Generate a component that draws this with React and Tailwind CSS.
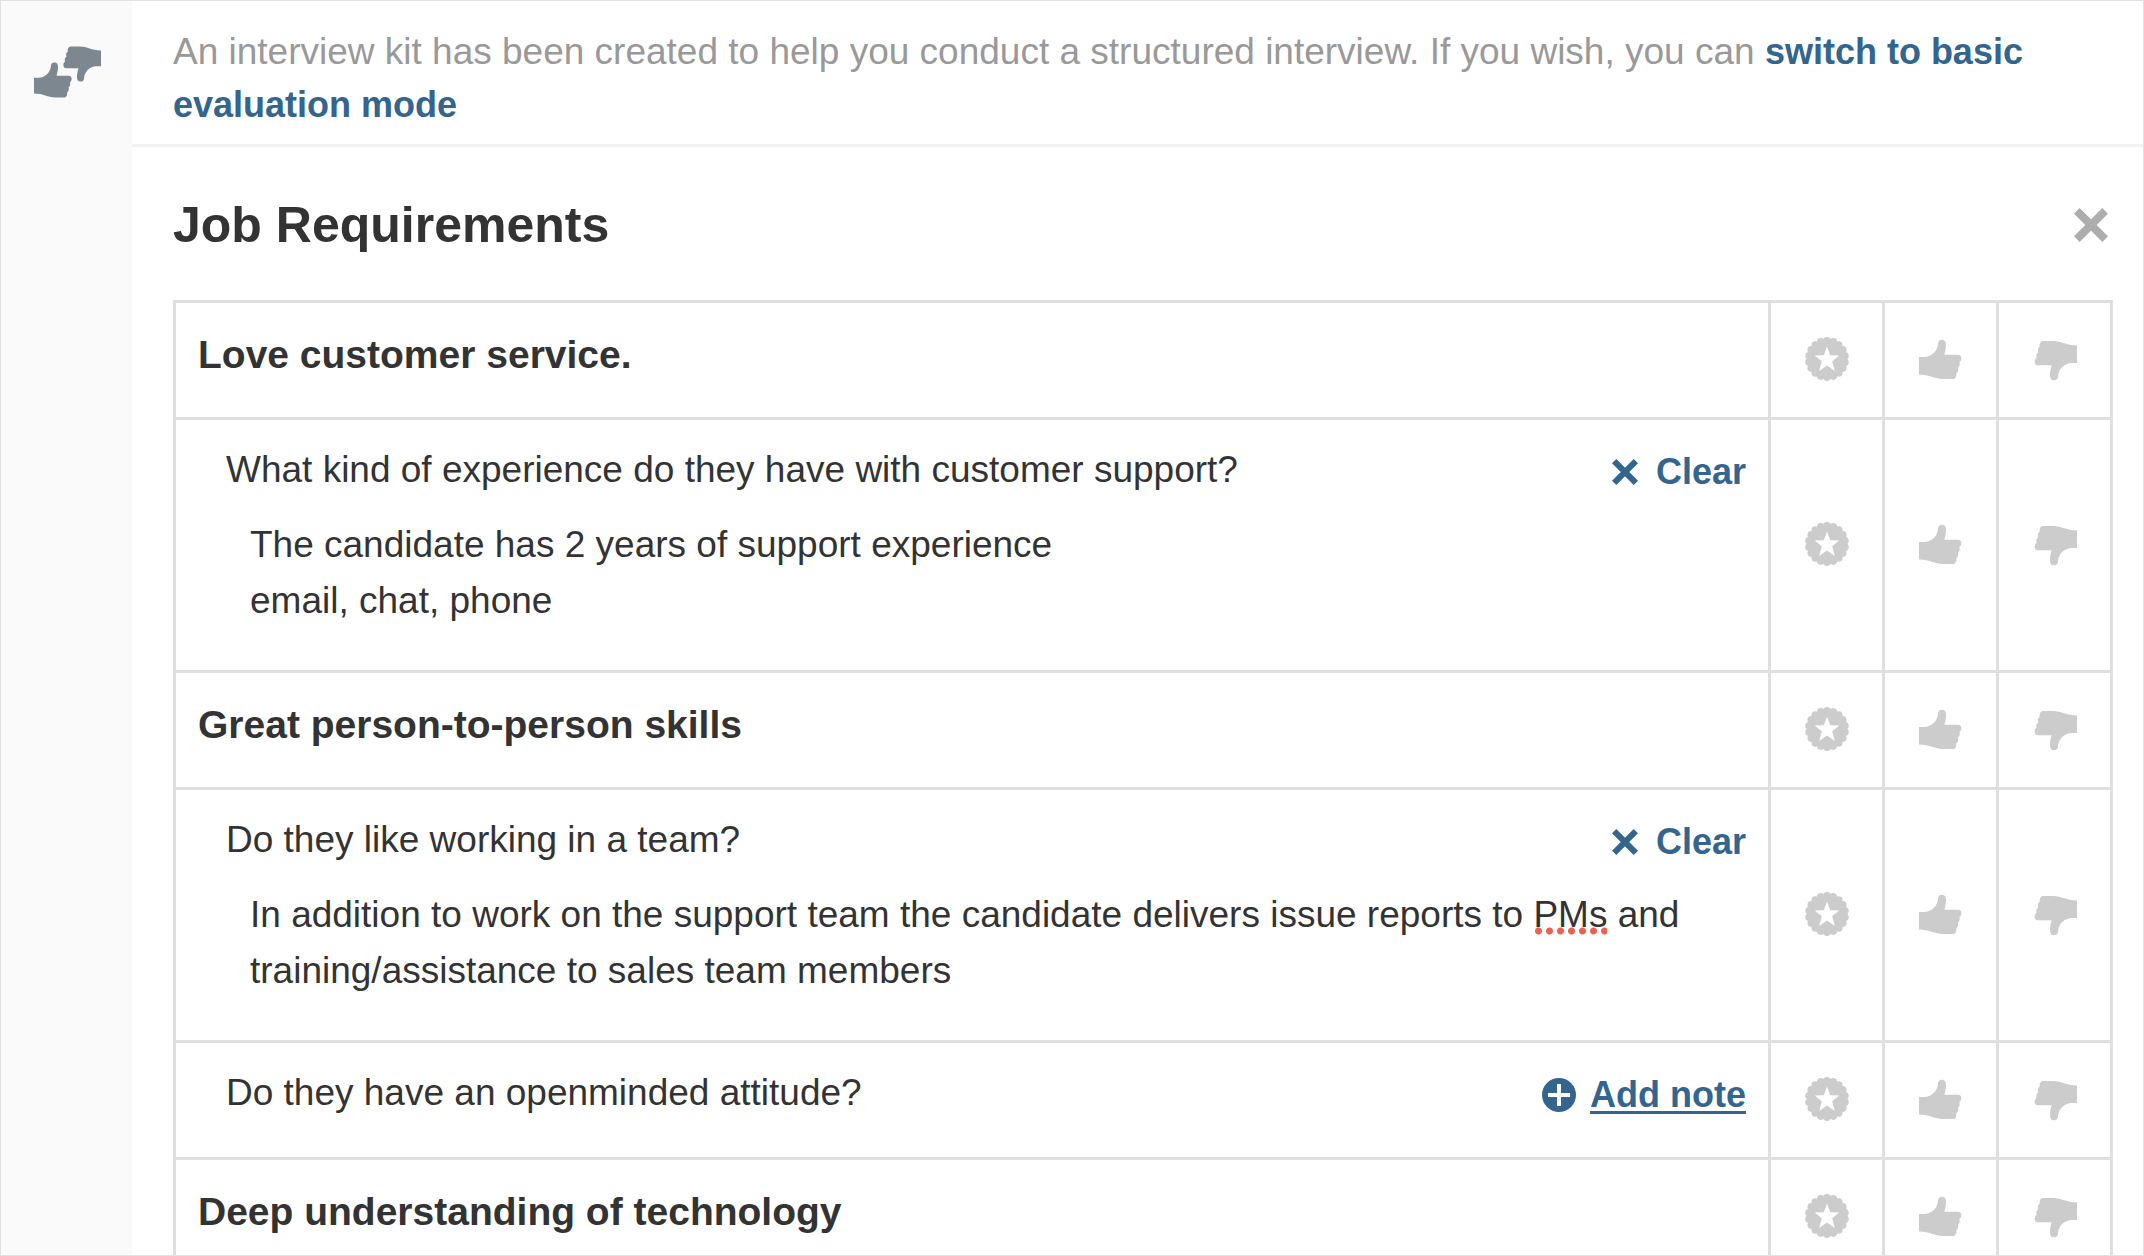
import { useState } from 'react';

const THUMB =
  'M0 20 H5 C13 20 19 13 19 6.5 C19 4 20.8 2.7 23 2.7 C26 2.7 27 5 27 8 C27 12 26 14.5 25.4 17.7 H39 C41.4 17.7 42.5 19.4 42.3 21.6 C42.1 23.4 41.6 24.4 40.4 25 C41.2 27.4 40.6 29.6 38.8 30.6 C39.6 33 39 35.4 37.2 36.4 C37.8 39.4 36.4 42 33.8 42 H24 C15 42 11 37.6 0 37.6 Z';

const SCALLOPS = Array.from({ length: 18 }, (_, i) => {
  const angle = (i * Math.PI) / 9;
  return { cx: 22 + 18.2 * Math.sin(angle), cy: 22 - 18.2 * Math.cos(angle) };
});

const sections = [
  {
    title: 'Love customer service.',
    questions: [
      {
        text: 'What kind of experience do they have with customer support?',
        note: (
          <>
            The candidate has 2 years of support experience
            <br />
            email, chat, phone
          </>
        ),
      },
    ],
  },
  {
    title: 'Great person-to-person skills',
    questions: [
      {
        text: 'Do they like working in a team?',
        note: (
          <>
            In addition to work on the support team the candidate delivers issue reports to{' '}
            <Misspelled>PMs</Misspelled> and training/assistance to sales team members
          </>
        ),
      },
      { text: 'Do they have an openminded attitude?' },
    ],
  },
  { title: 'Deep understanding of technology', questions: [] },
];

function Misspelled({ children }) {
  return (
    <span className="bg-[radial-gradient(circle,#ee5f50_3px,transparent_4px)] bg-[length:11px_8px] bg-left-bottom bg-repeat-x">
      {children}
    </span>
  );
}

function StarBadge() {
  return (
    <svg viewBox="0 0 44 44" className="size-11" fill="currentColor" aria-hidden="true">
      <circle cx="22" cy="22" r="19" />
      {SCALLOPS.map((s, i) => (
        <circle key={i} cx={s.cx} cy={s.cy} r="3.8" />
      ))}
      <path
        fill="#fff"
        d="M22 9.6 L25.2 18.2 L34.3 18.5 L27.2 24.2 L29.8 34 L22 28.6 L14.2 34 L16.8 24.2 L9.7 18.5 L18.8 18.2 Z"
      />
    </svg>
  );
}

function ThumbUp() {
  return (
    <svg viewBox="0 0 44 44" className="size-11" fill="currentColor" aria-hidden="true">
      <path d={THUMB} />
    </svg>
  );
}

function ThumbDown() {
  return (
    <svg viewBox="0 0 44 44" className="size-11 overflow-visible" fill="currentColor" aria-hidden="true">
      <path d={THUMB} transform="rotate(180 22 23)" />
    </svg>
  );
}

function EvaluationIcon() {
  return (
    <svg viewBox="0 0 68 52" className="h-[52px] w-[68px]" fill="currentColor" aria-hidden="true">
      <path d={THUMB} transform="translate(1 14) scale(.89)" />
      <path d={THUMB} transform="translate(68 38) rotate(180) scale(.89)" />
    </svg>
  );
}

function Cross({ className }) {
  return (
    <svg viewBox="0 0 24 24" className={className} stroke="currentColor" strokeWidth="5.6" aria-hidden="true">
      <path d="M2 2 L22 22 M22 2 L2 22" />
    </svg>
  );
}

function PlusCircle() {
  return (
    <svg viewBox="0 0 34 34" className="size-[34px]" aria-hidden="true">
      <circle cx="17" cy="17" r="17" fill="currentColor" />
      <path d="M17 6 V28 M6 17 H28" stroke="#fff" strokeWidth="4" />
    </svg>
  );
}

const ratings = [
  { id: 'star', label: 'Strong yes', Icon: StarBadge },
  { id: 'up', label: 'Yes', Icon: ThumbUp },
  { id: 'down', label: 'No', Icon: ThumbDown },
];

function RatingCells({ subject }) {
  const [rating, setRating] = useState(null);

  return ratings.map(({ id, label, Icon }) => (
    <td key={id} className="border-3 border-[#dfdfdf] p-0 pb-1.5 text-center align-middle">
      <button
        type="button"
        aria-label={`${label}: ${subject}`}
        aria-pressed={rating === id}
        onClick={() => setRating(rating === id ? null : id)}
        className={`inline-flex align-middle ${rating === id ? 'text-[#33658e]' : 'text-[#cccccc]'}`}
      >
        <Icon />
      </button>
    </td>
  ));
}

function TitleRow({ title }) {
  return (
    <tr className="h-[117px]">
      <th scope="row" className="border-3 border-[#dfdfdf] px-[22px] pt-6 text-left align-top text-[39px] leading-[56px] font-bold">
        {title}
      </th>
      <RatingCells subject={title} />
    </tr>
  );
}

function QuestionRow({ text, note }) {
  return (
    <tr className={note ? 'h-[253px]' : 'h-[117px]'}>
      <td className="border-3 border-[#dfdfdf] pt-[22px] pr-[22px] pl-[50px] align-top">
        <div className="flex items-start justify-between">
          <p>{text}</p>
          {note ? (
            <button type="button" className="mt-0.5 flex items-center gap-[18px] text-[36px] font-bold text-[#33658e]">
              <Cross className="size-[26px]" />
              Clear
            </button>
          ) : (
            <button type="button" className="mt-0.5 flex items-center gap-[14px] text-[36px] font-bold text-[#33658e]">
              <PlusCircle />
              <span className="underline decoration-3 underline-offset-4">Add note</span>
            </button>
          )}
        </div>
        {note && (
          <div
            role="textbox"
            aria-multiline="true"
            aria-label={`Note: ${text}`}
            contentEditable
            suppressContentEditableWarning
            spellCheck={false}
            className="mt-[17px] mr-12 ml-6 outline-none"
          >
            {note}
          </div>
        )}
      </td>
      <RatingCells subject={text} />
    </tr>
  );
}

export default function App() {
  return (
    <div className="flex h-screen overflow-hidden border border-[#e2e2e2] bg-white font-['Liberation_Sans',Arial,sans-serif] text-[37px] leading-[56px] text-[#333333]">
      <aside className="w-[131px] shrink-0 bg-[#fafafa] pt-[45px] pl-8 text-[#7d8790]">
        <EvaluationIcon />
      </aside>

      <main className="min-w-0 flex-1">
        <p className="border-b-3 border-[#f2f2f2] px-[41px] pt-6 pb-[13px] leading-[53px] text-[#999999]">
          An interview kit has been created to help you conduct a structured interview. If you wish, you can{' '}
          <a href="#basic" className="text-[36px] font-bold text-[#33658e]">
            switch to basic evaluation mode
          </a>
        </p>

        <section className="pr-[30px] pl-[41px]">
          <header className="flex items-center justify-between pt-[46px] pb-[43px]">
            <h1 className="text-[50px] leading-[64px] font-bold">Job Requirements</h1>
            <button type="button" aria-label="Close" className="mr-[5px] text-[#adadad]">
              <Cross className="size-[34px]" />
            </button>
          </header>

          <table className="w-full table-fixed border-collapse">
            <colgroup>
              <col />
              <col className="w-[114px]" />
              <col className="w-[114px]" />
              <col className="w-[114px]" />
            </colgroup>
            {sections.map((section) => (
              <tbody key={section.title}>
                <TitleRow title={section.title} />
                {section.questions.map((q) => (
                  <QuestionRow key={q.text} {...q} />
                ))}
              </tbody>
            ))}
          </table>
        </section>
      </main>
    </div>
  );
}
